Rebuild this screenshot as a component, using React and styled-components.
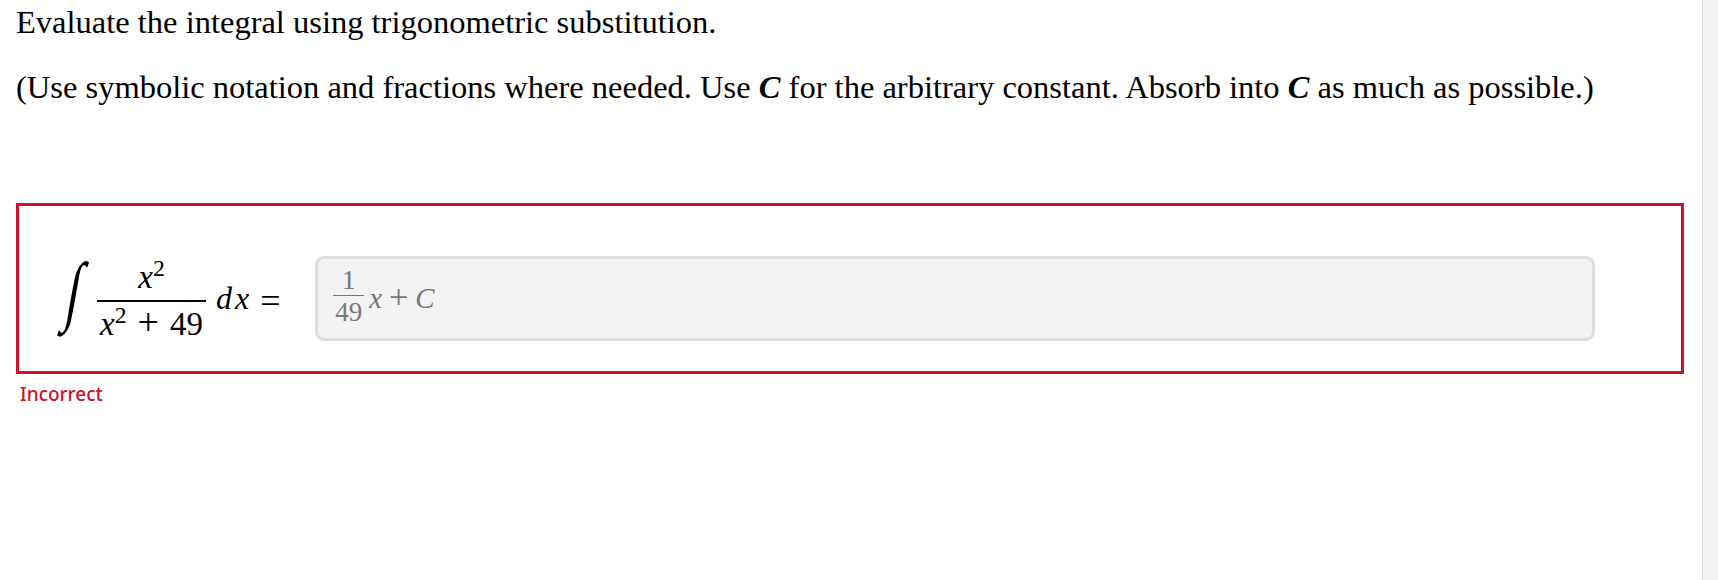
import styled, { createGlobalStyle } from "styled-components";

const GlobalStyle = createGlobalStyle`
  html, body {
    margin: 0;
    padding: 0;
    background: #fff;
    overflow: hidden;
  }
`;

const serif = `"Liberation Serif", "Times New Roman", serif`;
const red = "#ce1126";

const Page = styled.div`
  display: flex;
  width: 1718px;
  height: 580px;
  font-family: ${serif};
  color: #000;
`;
const Main = styled.main`
  flex: 1;
  padding: 2px 18px 0 16px;
`;
const Scrollbar = styled.div`
  width: 15px;
  background: #f1f1f1;
  border-left: 1px solid #dcdcdc;
`;
const Text = styled.p`
  margin: 0 0 25px;
  font-size: 32.5px;
  line-height: 40px;
`;
const Bold = styled.b`
  font-style: italic;
`;
const AnswerBox = styled.div`
  box-sizing: border-box;
  height: 171px;
  margin-top: 96px;
  padding: 50px 86px 0 39px;
  border: 3px solid ${red};
`;
const Row = styled.div`
  display: flex;
  align-items: center;
  height: 85px;
`;
const Integral = styled.span`
  width: 39px;
  font-size: 74px;
  line-height: 85px;
  transform-origin: 12px 50%;
  transform: translate(6px, -8px) skewX(-10deg) scale(0.68, 1.04);
`;
const Fraction = styled.span`
  display: inline-flex;
  flex-direction: column;
  align-items: center;
  flex-shrink: 0;
  width: ${(p) => p.$width}px;
  margin: ${(p) => p.$shift}px 0 0;
  font-size: ${(p) => p.$size}px;
  line-height: ${(p) => p.$lh}px;
`;
const Top = styled.span`
  margin-bottom: ${(p) => p.$gap || 0}px;
`;
const Bottom = styled.span`
  align-self: stretch;
  padding-top: 1px;
  text-align: center;
  border-top: ${(p) => p.$rule}px solid currentColor;
  white-space: nowrap;
`;
const Var = styled.i``;
const Sup = styled.sup`
  font-size: 0.72em;
  line-height: 0;
`;
const Operator = styled.span`
  margin: 0 ${(p) => p.$space}px;
  font-size: ${(p) => p.$size}px;
  line-height: 0;
`;
const Differential = styled.span`
  margin: 0 8px 0 10px;
  font-size: 32px;
  font-style: italic;
  letter-spacing: 3px;
`;
const Equals = styled.span`
  width: 55px;
  margin-top: 4px;
  font-size: 36px;
`;
const Input = styled.div`
  box-sizing: border-box;
  flex: 1;
  height: 85px;
  display: flex;
  align-items: center;
  padding: 0 0 0 15px;
  background: #f2f2f2;
  border: 3px solid #dedede;
  border-radius: 9px;
  color: #777;
`;
const Rest = styled.span`
  margin-left: 5px;
  font-size: 29px;
`;
const Status = styled.div`
  margin: 7px 0 0 4px;
  font-family: "Noto Sans", "Open Sans", sans-serif;
  font-size: 19px;
  font-weight: 500;
  line-height: 26px;
  color: ${red};
`;

export default function App() {
  return (
    <Page>
      <GlobalStyle />
      <Main>
        <Text>Evaluate the integral using trigonometric substitution.</Text>
        <Text>
          (Use symbolic notation and fractions where needed. Use <Bold>C</Bold> for the
          arbitrary constant. Absorb into <Bold>C</Bold> as much as possible.)
        </Text>
        <AnswerBox>
          <Row>
            <Integral>∫</Integral>
            <Fraction $size={33} $lh={42} $width={109} $shift={4}>
              <Top $gap={2}>
                <Var>x</Var>
                <Sup>2</Sup>
              </Top>
              <Bottom $rule={2}>
                <Var>x</Var>
                <Sup>2</Sup>
                <Operator $space={11} $size={38}>+</Operator>
                49
              </Bottom>
            </Fraction>
            <Differential>dx</Differential>
            <Equals>=</Equals>
            <Input>
              <Fraction $size={27} $lh={30} $width={31} $shift={-6}>
                <Top>1</Top>
                <Bottom $rule={1}>49</Bottom>
              </Fraction>
              <Rest>
                <Var>x</Var>
                <Operator $space={7} $size={34}>+</Operator>
                <Var>C</Var>
              </Rest>
            </Input>
          </Row>
        </AnswerBox>
        <Status>Incorrect</Status>
      </Main>
      <Scrollbar />
    </Page>
  );
}
